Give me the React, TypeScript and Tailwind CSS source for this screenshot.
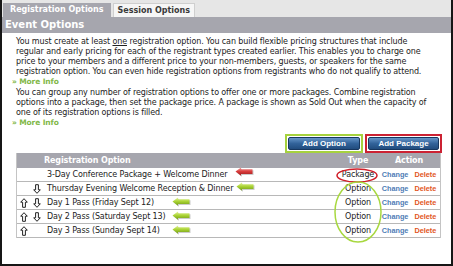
import React from "react";

const rows = [
  { up: false, down: false, name: "3-Day Conference Package + Welcome Dinner", type: "Package" },
  { up: false, down: true, name: "Thursday Evening Welcome Reception & Dinner", type: "Option" },
  { up: true, down: true, name: "Day 1 Pass (Friday Sept 12)", type: "Option" },
  { up: true, down: true, name: "Day 2 Pass (Saturday Sept 13)", type: "Option" },
  { up: true, down: false, name: "Day 3 Pass (Sunday Sept 14)", type: "Option" },
];

function UpIcon() {
  return (
    <svg width="8" height="10" viewBox="0 0 8 10">
      <path d="M4 0.7 L7.3 4.2 L5.4 4.2 L5.4 9.3 L2.6 9.3 L2.6 4.2 L0.7 4.2 Z" fill="white" stroke="#222" strokeWidth="1" strokeLinejoin="round" />
    </svg>
  );
}

function DownIcon() {
  return (
    <svg width="8" height="10" viewBox="0 0 8 10">
      <path d="M4 9.3 L7.3 5.8 L5.4 5.8 L5.4 0.7 L2.6 0.7 L2.6 5.8 L0.7 5.8 Z" fill="white" stroke="#222" strokeWidth="1" strokeLinejoin="round" />
    </svg>
  );
}

function Pointer({ red }: { red?: boolean }) {
  const id = red ? "gr" : "gg";
  return (
    <svg width="19" height="10" viewBox="0 0 19 10">
      <defs>
        <linearGradient id={id} x1="0" y1="0" x2="0" y2="1">
          <stop offset="0" stopColor={red ? "#f2a0a0" : "#e4f59a"} />
          <stop offset="0.5" stopColor={red ? "#d83a3a" : "#a8d232"} />
          <stop offset="1" stopColor={red ? "#9c1d1d" : "#6f9a18"} />
        </linearGradient>
      </defs>
      <path d="M1.5 5.5 L7 1.5 L7 3.3 L18.5 3.3 L18.5 8 L7 8 L7 9.7 Z" fill="#9a9a9a" opacity="0.5" />
      <path d="M0.5 4.5 L6 0.5 L6 2.3 L17.5 2.3 L17.5 7 L6 7 L6 8.7 Z" fill={`url(#${id})`} />
    </svg>
  );
}

export default function App() {
  return (
    <div className="relative w-[453px] h-[266px] overflow-hidden bg-white font-['DejaVu_Sans',sans-serif] text-[8px] tracking-[-0.12px] text-[#222]">
      <div className="h-full border-x-2 border-b-2 border-[#161616]">
        {/* tabs */}
        <div className="flex h-[17px] items-end gap-[2px] bg-[#e6e6e6] pl-[1px] tracking-normal">
          <div className="h-[14px] px-[7px] bg-[#a6a6ae] text-white font-bold leading-[14px] whitespace-nowrap">
            Registration Options
          </div>
          <div className="h-[14px] px-[4px] bg-[#f6f6f6] border border-b-0 border-[#cfcfcf] text-[#3a3a3a] font-bold leading-[13px] whitespace-nowrap">
            Session Options
          </div>
        </div>
        <div className="h-[16px] bg-[#a6a6ae] pl-[3px] text-[10px] font-bold leading-[16px] tracking-normal text-white">Event Options</div>

        <div className="pl-[14px] pr-[2px] pt-[4px] leading-[10px] whitespace-nowrap">
          <p>
            You must create at least <u>one</u> registration option. You can build flexible pricing structures that include
            <br />
            regular and early pricing for each of the registrant types created earlier. This enables you to charge one
            <br />
            price to your members and a different price to your non-members, guests, or speakers for the same
            <br />
            registration option. You can even hide registration options from registrants who do not qualify to attend.
          </p>
          <p className="-ml-[4px] text-[7.5px] font-bold text-[#82b848]">» More Info</p>
          <p className="mt-[1px]">
            You can group any number of registration options to offer one or more packages. Combine registration
            <br />
            options into a package, then set the package price. A package is shown as Sold Out when the capacity of
            <br />
            one of its registration options is filled.
          </p>
          <p className="-ml-[4px] text-[7.5px] font-bold text-[#82b848]">» More Info</p>

          <div className="mt-[6px] flex justify-end gap-[2px] pr-[7px] font-['Liberation_Sans',sans-serif] tracking-normal">
            <div className="border-2 border-[#a6d23e] p-[1px]">
              <button className="block h-[13px] w-[72px] rounded-[2px] border border-[#17375f] bg-gradient-to-b from-[#6595c8] via-[#32639a] to-[#214c7e] text-[8px] font-bold leading-[11px] text-white">
                Add Option
              </button>
            </div>
            <div className="border-2 border-[#cc2233] p-[1px]">
              <button className="block h-[13px] w-[71px] rounded-[2px] border border-[#17375f] bg-gradient-to-b from-[#6595c8] via-[#32639a] to-[#214c7e] text-[8px] font-bold leading-[11px] text-white">
                Add Package
              </button>
            </div>
          </div>

          {/* table */}
          <div className="w-[425px] border-x border-[#c4c4c4]">
            <div className="grid h-[15px] grid-cols-[27px_294px_40px_62px] bg-[#a6a6ae] font-bold leading-[15px] text-white">
              <div />
              <div>Registration Option</div>
              <div className="text-center">Type</div>
              <div className="text-center">Action</div>
            </div>
            {rows.map((r) => (
              <div key={r.name} className="grid h-[14px] grid-cols-[27px_294px_40px_62px] border-b border-[#b8b8b8] leading-[13px]">
                <div className="flex items-center gap-[5px] pl-[3px]">
                  <span className="w-[8px]">{r.up && <UpIcon />}</span>
                  <span className="w-[8px]">{r.down && <DownIcon />}</span>
                </div>
                <div className="pl-[3px]">{r.name}</div>
                <div className="text-center">{r.type}</div>
                <div className="flex justify-center gap-[6px] font-['Liberation_Sans',sans-serif] text-[7.3px] font-bold tracking-normal">
                  <span className="text-[#4f7db6]">Change</span>
                  <span className="text-[#e2561f]">Delete</span>
                </div>
              </div>
            ))}
          </div>
        </div>
      </div>

      {/* annotations */}
      <div className="absolute left-[235px] top-[167px]"><Pointer red /></div>
      <div className="absolute left-[236px] top-[182px]"><Pointer /></div>
      <div className="absolute left-[172px] top-[197px]"><Pointer /></div>
      <div className="absolute left-[172px] top-[211px]"><Pointer /></div>
      <div className="absolute left-[172px] top-[225px]"><Pointer /></div>
      <svg className="pointer-events-none absolute left-0 top-0" width="453" height="266" viewBox="0 0 453 266">
        <ellipse cx="357" cy="175.5" rx="20" ry="6.5" fill="none" stroke="#d0202a" strokeWidth="1.5" />
        <ellipse cx="358" cy="212" rx="23" ry="30" fill="none" stroke="#a8d840" strokeWidth="1.5" />
      </svg>
    </div>
  );
}
